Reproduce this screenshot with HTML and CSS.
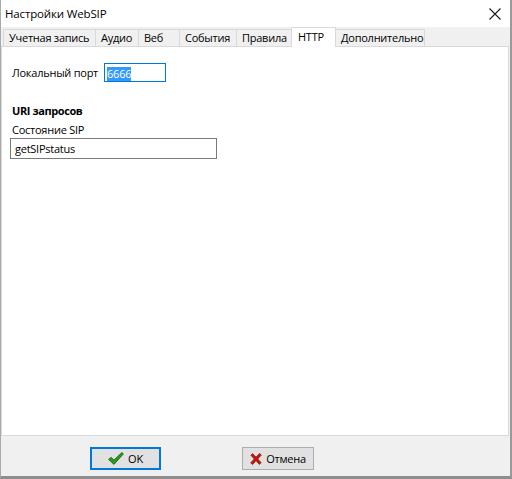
FILE: index.html
```html
<!DOCTYPE html>
<html lang="ru">
<head>
<meta charset="utf-8">
<title>Настройки WebSIP</title>
<link rel="stylesheet" href="styles.css">
</head>
<body>
<div class="window">
  <div class="titlebar">
    <span class="title">Настройки WebSIP</span>
    <svg class="close" width="12" height="12" viewBox="0 0 12 12"><path d="M0.5 0.5 L11.5 11.5 M11.5 0.5 L0.5 11.5" stroke="#1a1a1a" stroke-width="1.1" fill="none"/></svg>
  </div>
  <div class="body">
    <div class="tabs">
      <div class="tab t1">Учетная запись</div>
      <div class="tab t2">Аудио</div>
      <div class="tab t3">Веб</div>
      <div class="tab t4">События</div>
      <div class="tab t5">Правила</div>
      <div class="tab t6 active">HTTP</div>
      <div class="tab t7">Дополнительно</div>
    </div>
    <div class="panel">
      <div class="row">
        <label class="lbl">Локальный порт</label>
        <div class="input port"><span class="sel">6666</span></div>
      </div>
      <div class="section">URI запросов</div>
      <div class="lbl sub">Состояние SIP</div>
      <div class="input wide">getSIPstatus</div>
    </div>
    <div class="footer">
      <button class="btn default">
        <svg width="16" height="13" viewBox="0 0 16 13"><path d="M0.6 7.4 L3.2 5.3 L5.9 8.1 L13.9 0.5 L15.4 1.9 L6 12.4 Z" fill="#2b9c1c" stroke="#0f5e0a" stroke-width="0.8" stroke-linejoin="round"/></svg>
        <span>OK</span>
      </button>
      <button class="btn">
        <svg width="12" height="12" viewBox="0 0 12 12"><path d="M0.8 2.2 L2.6 0.6 L6 4 L9.6 0.4 L11.4 2 L7.8 5.9 L11.2 9.8 L9.3 11.5 L6 7.8 L2.6 11.6 L0.6 9.9 L4.2 5.9 Z" fill="#c3170e" stroke="#7d0b06" stroke-width="0.6" stroke-linejoin="round"/></svg>
        <span>Отмена</span>
      </button>
    </div>
  </div>
</div>
</body>
</html>
```
FILE: styles.css
```css
html, body {
  margin: 0;
  padding: 0;
  background: #ffffff;
}
body {
  font-family: "Open Sans", "Noto Sans", "DejaVu Sans", sans-serif;
  font-size: 11px;
  letter-spacing: -0.25px;
  color: #000;
}
.window {
  width: 512px;
  height: 479px;
  box-sizing: border-box;
  border-left: 1px solid #aaaaaa;
  border-right: 2px solid #9a9a9a;
  border-bottom: 3px solid #8e8e8e;
  display: flex;
  flex-direction: column;
  background: #f0f0f0;
}
.titlebar {
  height: 27px;
  background: #ffffff;
  display: flex;
  align-items: center;
  justify-content: space-between;
  padding: 0 8px 0 4px;
  flex: none;
}
.title {
  font-size: 11.5px;
  letter-spacing: -0.15px;
}
.close {
  margin-right: 1px;
}
.body {
  flex: 1;
  display: flex;
  flex-direction: column;
  background: #f0f0f0;
}
.tabs {
  display: flex;
  padding: 2px 0 0 2px;
  height: 17px;
  position: relative;
  z-index: 1;
}
.tab {
  box-sizing: border-box;
  height: 17px;
  padding: 0 0 0 5px;
  line-height: 16px;
  border: 1px solid #d9d9d9;
  border-bottom: none;
  margin-right: -1px;
  background: #f0f0f0;
  white-space: nowrap;
}
.t1 { width: 93px; }
.t2 { width: 44px; }
.t3 { width: 42px; }
.t4 { width: 58px; }
.t5 { width: 56px; }
.t6 { width: 45px; }
.t7 { width: 90px; }
.tab.active {
  background: #ffffff;
  height: 20px;
  margin-top: -2px;
  padding: 1px 0 0 6px;
  position: relative;
  z-index: 2;
}
.panel {
  flex: 1;
  background: #ffffff;
  border: 1px solid #d9d9d9;
  margin: 0 1px 1px 0;
  padding: 16px 0 0 9px;
}
.row {
  display: flex;
  align-items: center;
  gap: 6px;
}
.lbl {
  padding-left: 1px;
  white-space: nowrap;
}
.input {
  box-sizing: border-box;
  height: 21px;
  border: 1px solid #7a7a7a;
  background: #fff;
  line-height: 19px;
  padding-left: 2px;
}
.port {
  width: 62px;
  height: 19px;
  line-height: 17px;
  border-color: #0078d7;
  padding-left: 2px;
}
.sel {
  background: #3399ff;
  color: #fff;
  display: inline-block;
  line-height: 14px;
  vertical-align: middle;
}
.section {
  font-weight: bold;
  letter-spacing: -0.4px;
  margin-top: 21px;
  padding-left: 1px;
}
.sub {
  margin-top: 4px;
}
.wide {
  width: 207px;
  margin-top: 1px;
  margin-left: -1px;
  padding-left: 4px;
}
.footer {
  height: 39px;
  flex: none;
  display: flex;
  align-items: flex-start;
  padding: 10px 0 0 89px;
  box-sizing: border-box;
  gap: 81px;
}
.btn {
  box-sizing: border-box;
  width: 72px;
  height: 23px;
  background: #e1e1e1;
  border: 1px solid #adadad;
  display: flex;
  align-items: center;
  justify-content: center;
  gap: 4px;
  font-family: inherit;
  font-size: 11px;
  letter-spacing: -0.25px;
  padding: 0;
  color: #000;
}
.btn.default {
  border: 2px solid #0078d7;
  width: 71px;
}
```
